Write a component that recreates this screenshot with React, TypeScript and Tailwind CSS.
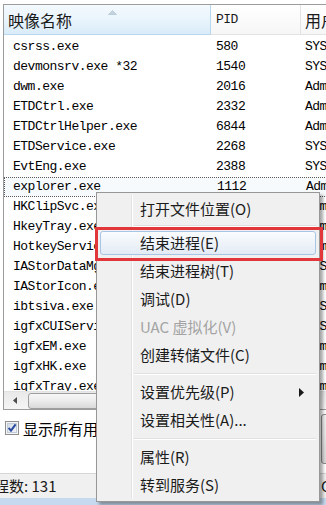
import React from "react";

const rows: [string, string, string][] = [
  ["csrss.exe", "580", "SYSTEM"],
  ["devmonsrv.exe *32", "1540", "SYSTEM"],
  ["dwm.exe", "2016", "Administrator"],
  ["ETDCtrl.exe", "2332", "Administrator"],
  ["ETDCtrlHelper.exe", "6844", "Administrator"],
  ["ETDService.exe", "2268", "SYSTEM"],
  ["EvtEng.exe", "2388", "SYSTEM"],
  ["explorer.exe", "1112", "Administrator"],
  ["HKClipSvc.exe", "2460", "Administrator"],
  ["HkeyTray.exe", "2492", "Administrator"],
  ["HotkeyService.exe", "2504", "Administrator"],
  ["IAStorDataMgrSvc.exe", "2896", "SYSTEM"],
  ["IAStorIcon.exe", "3012", "Administrator"],
  ["ibtsiva.exe", "1780", "SYSTEM"],
  ["igfxCUIService.exe", "1236", "SYSTEM"],
  ["igfxEM.exe", "3120", "Administrator"],
  ["igfxHK.exe", "3136", "Administrator"],
  ["igfxTray.exe", "3144", "Administrator"],
];

type MenuEntry =
  | { kind: "item"; t: string; hl?: boolean; dis?: boolean; sub?: boolean }
  | { kind: "sep"; big?: boolean };

const menu: MenuEntry[] = [
  { kind: "item", t: "打开文件位置(O)" },
  { kind: "sep" },
  { kind: "item", t: "结束进程(E)", hl: true },
  { kind: "item", t: "结束进程树(T)" },
  { kind: "item", t: "调试(D)" },
  { kind: "item", t: "UAC 虚拟化(V)", dis: true },
  { kind: "item", t: "创建转储文件(C)" },
  { kind: "sep", big: true },
  { kind: "item", t: "设置优先级(P)", sub: true },
  { kind: "item", t: "设置相关性(A)..." },
  { kind: "sep", big: true },
  { kind: "item", t: "属性(R)" },
  { kind: "item", t: "转到服务(S)" },
];

const cjk = "[font-family:'Noto_Sans_CJK_SC','Microsoft_YaHei',sans-serif]";
const mono = "[font-family:'Liberation_Mono',monospace]";

function Header() {
  return (
    <div className="flex h-[30px] shrink-0">
      <div className="relative w-[207px] shrink-0 flex items-center pl-[4px] bg-gradient-to-b from-[#f4fafe] via-[#e9f4fc] to-[#d9ecf9] border-b border-r border-[#b9d7ee]">
        <span className={`${cjk} text-[16px] leading-[20px] text-[#1a1a1a]`}>映像名称</span>
        <svg className="absolute left-[104px] top-[5px]" width="9" height="5" viewBox="0 0 9 5">
          <path d="M0.5 4.5 L4.5 0.5 L8.5 4.5 Z" fill="#c4d3e0" stroke="#a9bccd" strokeWidth="0.6" />
        </svg>
      </div>
      <div className="w-[90px] shrink-0 flex items-center pl-[5px] bg-gradient-to-b from-white to-[#f6f6f6] border-b border-r border-[#e3e3e3]">
        <span className={`${mono} text-[13px] tracking-[-0.5px] text-[#1a1a1a]`}>PID</span>
      </div>
      <div className="w-[120px] shrink-0 flex items-center pl-[4px] bg-gradient-to-b from-white to-[#f6f6f6] border-b border-[#e3e3e3]">
        <span className={`${cjk} text-[16px] leading-[20px] text-[#1a1a1a]`}>用户名</span>
      </div>
    </div>
  );
}

function Row({ r, sel }: { r: [string, string, string]; sel: boolean }) {
  return (
    <div
      className={
        "flex h-[20px] items-center text-[13px] tracking-[-0.5px] text-black " +
        mono +
        (sel ? " border-y border-l border-dotted border-[#5a5a5a] bg-[#f7fafd]" : "")
      }
    >
      <div className={"w-[207px] shrink-0 whitespace-nowrap overflow-hidden " + (sel ? "pl-[8px] w-[206px]" : "pl-[9px]")}>
        {r[0]}
      </div>
      <div className="w-[90px] shrink-0 pl-[5px] whitespace-nowrap">{r[1]}</div>
      <div className="w-[120px] shrink-0 pl-[4px] whitespace-nowrap">{r[2]}</div>
    </div>
  );
}

function Scrollbar() {
  return (
    <div className="flex h-[18px] shrink-0 items-center bg-gradient-to-b from-[#e9e9e9] to-[#f5f5f5] border-t border-[#e2e2e2]">
      <div className="w-[22px] h-full shrink-0 flex items-center justify-center">
        <svg width="4" height="7" viewBox="0 0 4 7">
          <path d="M4 0 L0 3.5 L4 7 Z" fill="#4d4d4d" />
        </svg>
      </div>
      <div className="ml-[2px] h-[16px] w-[280px] shrink-0 rounded-[3px] border border-[#9e9e9e] bg-gradient-to-b from-[#f7f7f7] via-[#ececec] to-[#d9d9d9]" />
    </div>
  );
}

function CheckBox() {
  return (
    <svg width="14" height="14" viewBox="0 0 14 14">
      <defs>
        <linearGradient id="cb" x1="0" y1="0" x2="1" y2="1">
          <stop offset="0" stopColor="#d2dbe6" />
          <stop offset="1" stopColor="#f4f6f9" />
        </linearGradient>
      </defs>
      <rect x="0.5" y="0.5" width="13" height="13" fill="#f5f5f5" stroke="#8e8f8f" />
      <rect x="2.5" y="2.5" width="9" height="9" fill="url(#cb)" stroke="#c3cdd9" />
      <path d="M3.6 6.8 L6 9.6 L10.6 3.4" fill="none" stroke="#2a4b9f" strokeWidth="2" />
    </svg>
  );
}

function ContextMenu() {
  return (
    <div className="absolute left-[96px] top-[192px] w-[224px] h-[310px] bg-[#f0f0f0] border border-[#979797] shadow-[3px_3px_3px_rgba(0,0,0,0.35)] pt-[2px] pb-[2px] flex flex-col">
      <div className="absolute left-[34px] top-[2px] bottom-[2px] w-[2px] border-l border-[#e2e3e3] bg-white" />
      {menu.map((m, i) =>
        m.kind === "sep" ? (
          <div key={i} className={"relative flex items-center pl-[37px] pr-[3px] " + (m.big ? "h-[9px]" : "h-[6px]")}>
            <div className="w-full h-[2px] border-t border-[#e0e0e0] bg-white" />
          </div>
        ) : (
          <div key={i} className="relative h-[28px] px-[3px] py-[2px]">
            <div
              className={
                "relative h-full flex items-center pl-[39px] rounded-[3px] border " +
                (m.hl ? "border-[#a9c5e6] bg-gradient-to-b from-[#fafcfe] to-[#e3ebf5]" : "border-transparent")
              }
            >
              <span className={`${cjk} text-[15px] leading-[20px] whitespace-nowrap ` + (m.dis ? "text-[#a3a3a3]" : "text-[#1b1b1b]")}>
                {m.t}
              </span>
              {m.sub && (
                <svg className="absolute right-[11px]" width="5" height="9" viewBox="0 0 5 9">
                  <path d="M0 0 L5 4.5 L0 9 Z" fill="#1a1a1a" />
                </svg>
              )}
            </div>
          </div>
        )
      )}
    </div>
  );
}

export default function App() {
  return (
    <div className="relative w-[326px] h-[505px] overflow-hidden bg-white flex flex-col">
      <div className="h-[4px] shrink-0" />
      <div className="ml-[3px] w-[340px] h-[406px] shrink-0 border-y border-l border-[#9c9c9c] flex flex-col overflow-hidden">
        <Header />
        <div className="flex-1 overflow-hidden pt-[2px]">
          {rows.map((r, i) => (
            <Row key={i} r={r} sel={i === 7} />
          ))}
        </div>
        <Scrollbar />
      </div>
      <div className="flex h-[63px] shrink-0">
        <div className="w-[321px] shrink-0 flex items-start pl-[5px] pt-[11px] gap-[4px]">
          <CheckBox />
          <span className={`${cjk} text-[15px] leading-[15px] text-black whitespace-nowrap`}>显示所有用户的进程(S)</span>
        </div>
        <div className="mt-[4px] h-[50px] w-[90px] shrink-0 rounded-[3px] border border-[#8d8d8d] bg-gradient-to-b from-[#f2f2f2] to-[#d8d8d8]" />
      </div>
      <div className={`h-[25px] shrink-0 bg-[#f0f0f0] border-t border-[#d6d6d6] flex items-center ${cjk} text-[15px] leading-[20px] text-[#1a1a1a]`}>
        <span className="ml-[-21px] w-[342px] shrink-0 whitespace-nowrap">进程数: 131</span>
        <span className="whitespace-nowrap">CPU 使用率: 3%</span>
      </div>
      <div className="h-[7px] shrink-0 bg-[#c6d9ee]" />
      <ContextMenu />
      <div className="absolute left-[95px] top-[227px] w-[228px] h-[34px] border-[3px] border-[#e2373a]" />
    </div>
  );
}
